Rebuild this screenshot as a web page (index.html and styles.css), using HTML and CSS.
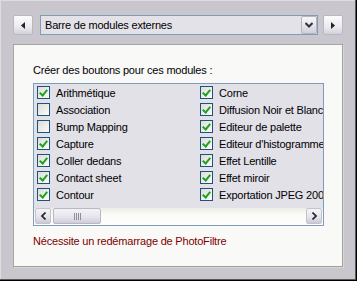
FILE: index.html
```html
<!DOCTYPE html>
<html lang="fr">
<head>
    <meta charset="UTF-8">
    <title>Barre de modules externes</title>
    <link rel="stylesheet" href="styles.css">
</head>
<body>
    <div class="window">
        <div class="toolbar">
            <button class="nav-button">
                <svg width="4" height="7" viewBox="0 0 4 7"><path d="M4 0V7L0 3.5Z" fill="#222"/></svg>
            </button>
            <div class="combo">
                <span class="combo-text">Barre de modules externes</span>
                <span class="combo-button">
                    <svg width="8" height="6" viewBox="0 0 8 6"><path d="M0.5 1L4 4.5L7.5 1" fill="none" stroke="#333" stroke-width="2"/></svg>
                </span>
            </div>
            <button class="nav-button">
                <svg width="4" height="7" viewBox="0 0 4 7"><path d="M0 0V7L4 3.5Z" fill="#222"/></svg>
            </button>
        </div>

        <div class="panel">
            <div class="caption">Créer des boutons pour ces modules :</div>
            <div class="listbox">
                <div class="items">
                    <div class="column">
                        <label class="item"><span class="check on"></span>Arithmétique</label>
                        <label class="item"><span class="check"></span>Association</label>
                        <label class="item"><span class="check"></span>Bump Mapping</label>
                        <label class="item"><span class="check on"></span>Capture</label>
                        <label class="item"><span class="check on"></span>Coller dedans</label>
                        <label class="item"><span class="check on"></span>Contact sheet</label>
                        <label class="item"><span class="check on"></span>Contour</label>
                    </div>
                    <div class="column">
                        <label class="item"><span class="check on"></span>Corne</label>
                        <label class="item"><span class="check on"></span>Diffusion Noir et Blanc</label>
                        <label class="item"><span class="check on"></span>Editeur de palette</label>
                        <label class="item"><span class="check on"></span>Editeur d'histogramme</label>
                        <label class="item"><span class="check on"></span>Effet Lentille</label>
                        <label class="item"><span class="check on"></span>Effet miroir</label>
                        <label class="item"><span class="check on"></span>Exportation JPEG 2000</label>
                    </div>
                </div>
                <div class="hscroll">
                    <span class="scroll-button">
                        <svg width="5" height="8" viewBox="0 0 5 8"><path d="M4.5 0.5L1 4L4.5 7.5" fill="none" stroke="#222" stroke-width="1.6"/></svg>
                    </span>
                    <span class="thumb"><span class="grip"></span></span>
                    <span class="track"></span>
                    <span class="scroll-button">
                        <svg width="5" height="8" viewBox="0 0 5 8"><path d="M0.5 0.5L4 4L0.5 7.5" fill="none" stroke="#222" stroke-width="1.6"/></svg>
                    </span>
                </div>
            </div>
            <div class="notice">Nécessite un redémarrage de PhotoFiltre</div>
        </div>
    </div>
</body>
</html>
```

FILE: styles.css
```css
body {
    margin: 0;
    font-family: 'Liberation Sans', Arial, sans-serif;
    font-size: 11px;
    letter-spacing: -0.2px;
    color: #000000;
}

.window {
    width: 357px;
    height: 281px;
    box-sizing: border-box;
    padding: 15px 13px 0 13px;
    background-color: #c9c6cd;
    box-shadow: inset -1px -1px 0 #000000, inset -2px -2px 0 #5a585c, inset 1px 1px 0 #dedce0;
}

.toolbar {
    display: flex;
    align-items: center;
    height: 20px;
}

.nav-button {
    width: 20px;
    height: 20px;
    padding: 0;
    border: 1px solid #b9b8c0;
    border-radius: 2px;
    background: linear-gradient(#fbfbfd, #ecebf1 60%, #d3d2dc);
    display: flex;
    align-items: center;
    justify-content: center;
}

.combo {
    width: 278px;
    height: 20px;
    box-sizing: border-box;
    margin: 0 5px 0 7px;
    border: 1px solid #7f9db9;
    background-color: #e3e2e9;
    display: flex;
    align-items: center;
}

.combo-text {
    flex: 1;
    padding-left: 4px;
}

.combo-button {
    width: 16px;
    height: 18px;
    box-sizing: border-box;
    border: 1px solid #b5b4bf;
    border-radius: 2px;
    background: linear-gradient(#f7f7fa, #e2e1ea 60%, #cfcedb);
    display: flex;
    align-items: center;
    justify-content: center;
}

.panel {
    width: 331px;
    height: 224px;
    box-sizing: border-box;
    margin-top: 9px;
    padding: 19px 0 0 19px;
    border: 1px solid #a3a7a3;
    border-right-color: #d6d8cf;
    border-bottom-color: #d6d8cf;
    box-shadow: inset -1px -1px 0 #9ea39e;
    background-color: #f9f9f7;
}

.caption {
    height: 13px;
    line-height: 13px;
    margin-bottom: 6px;
}

.listbox {
    width: 291px;
    height: 143px;
    box-sizing: border-box;
    border: 1px solid #7f9db9;
    background-color: #e2e1e8;
    display: flex;
    flex-direction: column;
}

.items {
    flex: 1;
    display: flex;
    padding: 0 0 0 1px;
    overflow: hidden;
}

.column {
    flex: 0 0 163px;
    display: flex;
    flex-direction: column;
}

.item {
    height: 17px;
    flex: 0 0 17px;
    display: flex;
    align-items: center;
    gap: 6px;
    padding-left: 2px;
    white-space: nowrap;
}

.check {
    flex: 0 0 auto;
    width: 13px;
    height: 13px;
    box-sizing: border-box;
    border: 1px solid #1c5180;
    background: linear-gradient(135deg, #dcdcd7, #fbfbf9);
    position: relative;
}

.check.on::after {
    content: "";
    position: absolute;
    left: 3px;
    top: 1px;
    width: 3px;
    height: 6px;
    border: solid #21a121;
    border-width: 0 2px 2px 0;
    transform: rotate(40deg);
}

.hscroll {
    height: 17px;
    flex: 0 0 17px;
    display: flex;
    align-items: stretch;
    background: linear-gradient(#eeede5, #fbfbf8 40%, #fefefe);
    padding: 0 1px 1px 1px;
    box-sizing: border-box;
}

.scroll-button {
    width: 16px;
    box-sizing: border-box;
    border: 1px solid #c3c3cc;
    border-radius: 2px;
    background: linear-gradient(#f4f4f8, #e4e3eb 60%, #c9c8d6);
    display: flex;
    align-items: center;
    justify-content: center;
}

.thumb {
    width: 48px;
    margin-left: 2px;
    box-sizing: border-box;
    border: 1px solid #b8b7c3;
    border-radius: 2px;
    background: linear-gradient(#f3f3f7, #e5e4ec 60%, #cdccd9);
    display: flex;
    align-items: center;
    justify-content: center;
}

.grip {
    width: 7px;
    height: 7px;
    background: repeating-linear-gradient(90deg, #8e8d9b 0 1px, transparent 1px 2px);
}

.track {
    flex: 1;
}

.notice {
    margin-top: 9px;
    color: #800000;
}
```
